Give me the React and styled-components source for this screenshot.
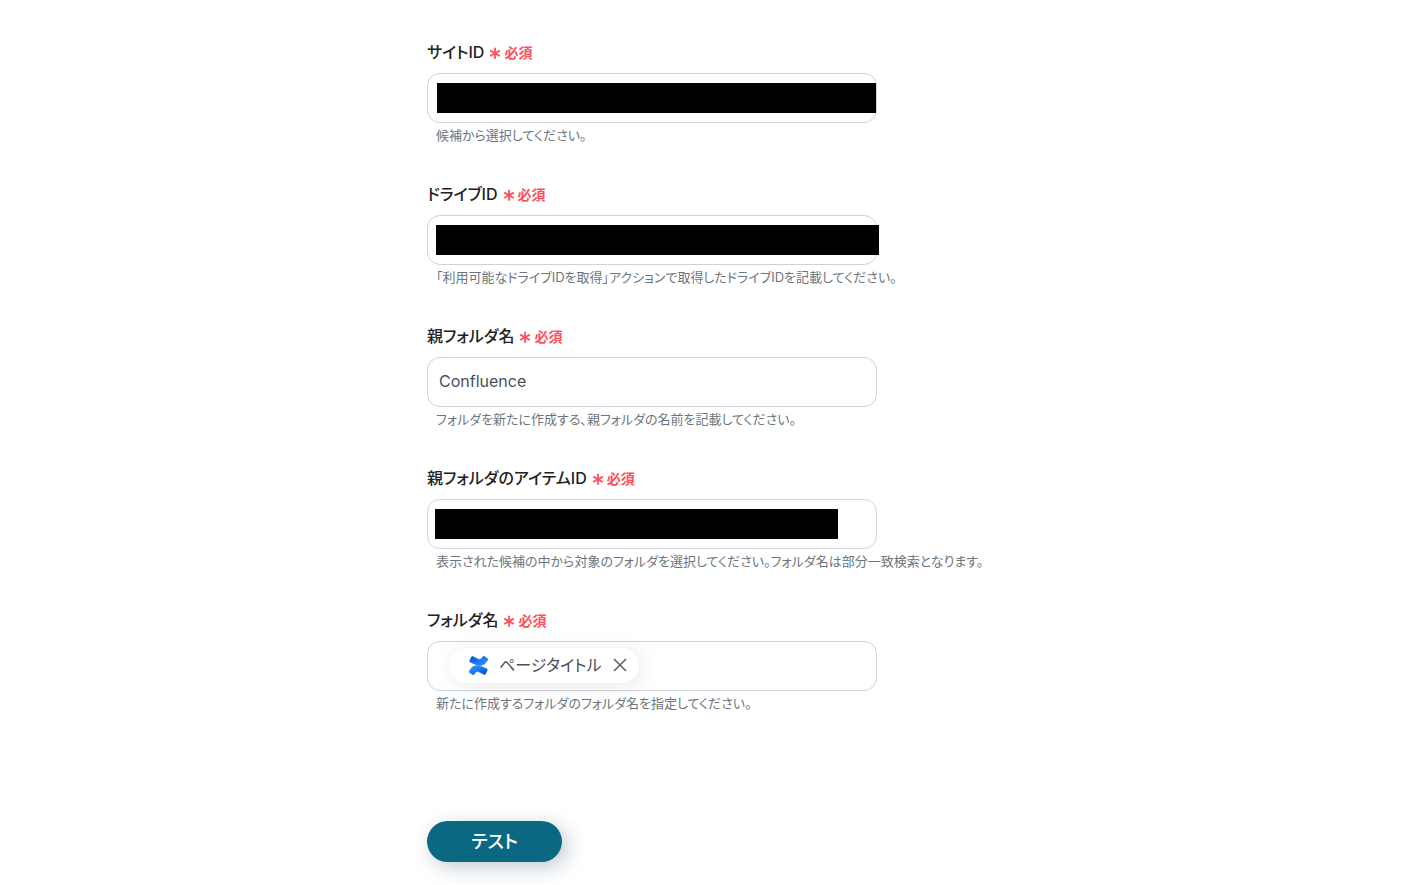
import React, { useState } from 'react';
import styled, { createGlobalStyle } from 'styled-components';

const GlobalStyle = createGlobalStyle`
  * {
    box-sizing: border-box;
  }
  body {
    margin: 0;
    background: #fff;
    color: #222;
    font-family: Inter, "Noto Sans CJK JP", sans-serif;
    font-size: 16px;
    font-feature-settings: "palt";
  }
  button, input {
    font: inherit;
    font-feature-settings: inherit;
  }
`;

const Form = styled.form`
  max-width: 560px;
  margin: 0 auto;
  padding: 40px 0 23px;
`;
const Fields = styled.div`
  display: grid;
  gap: 37px;
`;
const FieldRow = styled.div`
  display: flex;
  flex-direction: column;
`;
const Label = styled.label`
  display: flex;
  align-items: center;
  gap: 5px;
  margin-bottom: 9px;
  font-weight: 500;
  line-height: 24px;
`;
const Required = styled.span`
  display: flex;
  align-items: center;
  gap: 3px;
  padding-top: 2px;
  color: #ff4f60;
  font-size: 14px;
  font-weight: 600;
  line-height: 22px;
`;
const Control = styled.div`
  position: relative;
  display: flex;
  align-items: center;
  width: 100%;
  max-width: 450px;
  height: 50px;
  padding: 0 11px 2px;
  border: 1px solid #ced1da;
  border-radius: 13px;
`;
const TextInput = styled.input`
  flex: 1;
  min-width: 0;
  height: 44px;
  padding: 0;
  border: 0;
  outline: 0;
  background: transparent;
  color: #495057;
`;
const Mask = styled.span`
  position: absolute;
  top: 9px;
  left: ${({ $left }) => $left}px;
  width: ${({ $width }) => $width}px;
  height: 30px;
  background: #000;
`;
const Help = styled.p`
  margin: 2px 0 0 9px;
  color: #6c757d;
  font-size: 13px;
  line-height: 20px;
`;
const Chip = styled.span`
  display: flex;
  align-items: center;
  height: 35px;
  margin-left: 10px;
  padding: 0 12px 0 20px;
  border-radius: 18px;
  background: #fff;
  box-shadow: 3px 3px 20px rgba(0, 0, 0, 0.09);
  color: #495057;
`;
const ChipText = styled.span`
  margin: 0 12px 0 11px;
  line-height: 24px;
`;
const Remove = styled.button`
  display: flex;
  padding: 0;
  border: 0;
  background: none;
  color: #666;
  cursor: pointer;
`;
const Submit = styled.button`
  width: 135px;
  height: 41px;
  margin-top: 108px;
  padding: 0 0 4px;
  border: 0;
  border-radius: 21px;
  background: #0b6882;
  box-shadow: 5px 5px 20px rgba(11, 40, 70, 0.25);
  color: #fff;
  font-size: 18px;
  font-weight: 500;
  cursor: pointer;
`;

function Asterisk() {
  return (
    <svg width="12" height="12" viewBox="0 0 12 12" fill="none" stroke="currentColor" strokeWidth="1.8" aria-hidden="true">
      <path d="M6 .8v11M1.2 3.6l9.6 5.4M10.8 3.6L1.2 9" />
    </svg>
  );
}

function ConfluenceLogo() {
  return (
    <svg width="19" height="19" viewBox="0 0 24 24" aria-hidden="true">
      <defs>
        <linearGradient id="lower" x1="1" y1="1" x2="0.2" y2="0.3">
          <stop offset="0.1" stopColor="#0052cc" />
          <stop offset="0.9" stopColor="#2684ff" />
        </linearGradient>
        <linearGradient id="upper" x1="0" y1="0" x2="0.8" y2="0.7">
          <stop offset="0.1" stopColor="#0052cc" />
          <stop offset="0.9" stopColor="#2684ff" />
        </linearGradient>
      </defs>
      {/* the two ribbons run wide enough to meet in the middle */}
      <path
        fill="url(#lower)"
        stroke="url(#lower)"
        d="M.87 18.257c-.248.382-.53.875-.763 1.245a.764.764 0 0 0 .255 1.04l4.965 3.054a.764.764 0 0 0 1.058-.26c.199-.332.454-.763.733-1.221 1.967-3.247 3.945-2.853 7.508-1.146l4.957 2.337a.764.764 0 0 0 1.028-.382l2.364-5.346a.764.764 0 0 0-.382-1 599.851 599.851 0 0 1-4.965-2.361C10.911 10.97 5.224 11.185.87 18.257z"
      />
      <path
        fill="url(#upper)"
        stroke="url(#upper)"
        d="M23.131 5.743c.249-.405.531-.875.764-1.25a.764.764 0 0 0-.256-1.034L18.675.404a.764.764 0 0 0-1.058.26c-.195.335-.451.763-.734 1.225-1.966 3.246-3.945 2.85-7.508 1.146L4.437.694a.764.764 0 0 0-1.027.382L1.046 6.422a.764.764 0 0 0 .382 1c1.039.49 3.105 1.467 4.965 2.361 6.698 3.246 12.392 3.029 16.738-4.04z"
      />
    </svg>
  );
}

function Field({ id, label, help, children }) {
  return (
    <FieldRow>
      <Label htmlFor={id}>
        {label}
        <Required>
          <Asterisk />
          必須
        </Required>
      </Label>
      <Control>{children}</Control>
      <Help id={`${id}-help`}>{help}</Help>
    </FieldRow>
  );
}

export default function App() {
  const [chips, setChips] = useState(['ページタイトル']);

  return (
    <>
      <GlobalStyle />
      <Form onSubmit={e => e.preventDefault()}>
        <Fields>
          <Field id="site" label="サイトID" help="候補から選択してください。">
            <TextInput id="site" aria-describedby="site-help" />
            <Mask $left={9} $width={439} />
          </Field>
          <Field
            id="drive"
            label="ドライブID"
            help="「利用可能なドライブIDを取得」アクションで取得したドライブIDを記載してください。"
          >
            <TextInput id="drive" aria-describedby="drive-help" />
            <Mask $left={8} $width={443} />
          </Field>
          <Field
            id="parent"
            label="親フォルダ名"
            help="フォルダを新たに作成する、親フォルダの名前を記載してください。"
          >
            <TextInput id="parent" aria-describedby="parent-help" defaultValue="Confluence" />
          </Field>
          <Field
            id="item"
            label="親フォルダのアイテムID"
            help="表示された候補の中から対象のフォルダを選択してください。フォルダ名は部分一致検索となります。"
          >
            <TextInput id="item" aria-describedby="item-help" />
            <Mask $left={7} $width={403} />
          </Field>
          <Field
            id="folder"
            label="フォルダ名"
            help="新たに作成するフォルダのフォルダ名を指定してください。"
          >
            {chips.map(chip => (
              <Chip key={chip}>
                <ConfluenceLogo />
                <ChipText>{chip}</ChipText>
                <Remove type="button" aria-label="削除" onClick={() => setChips(chips.filter(c => c !== chip))}>
                  <svg width="14" height="14" viewBox="0 0 14 14" fill="none" stroke="currentColor" strokeWidth="1.7">
                    <path d="M1 1l12 12M13 1L1 13" />
                  </svg>
                </Remove>
              </Chip>
            ))}
            <TextInput id="folder" aria-describedby="folder-help" />
          </Field>
        </Fields>
        <Submit type="submit">テスト</Submit>
      </Form>
    </>
  );
}
